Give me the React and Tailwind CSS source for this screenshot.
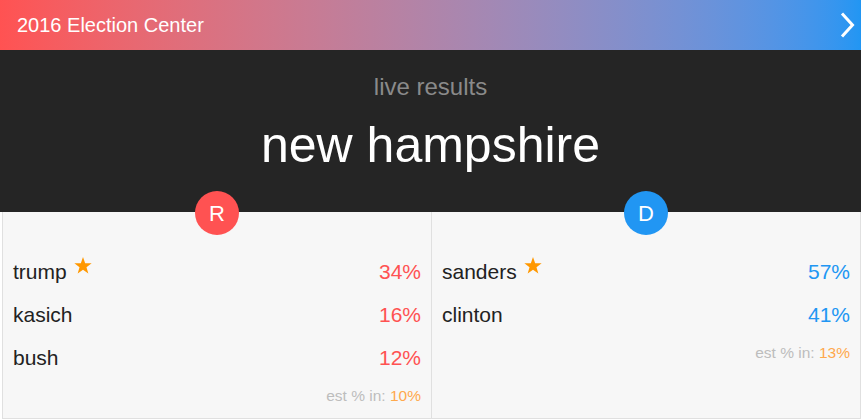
import React from "react";

const font = { fontFamily: '"Liberation Sans", Arial, sans-serif' };

function Star() {
  return (
    <svg width="18" height="17" viewBox="0 0 24 23" className="ml-[7px] self-start mt-[-3px]">
      <polygon
        points="12,0 14.9,8.3 23.7,8.5 16.7,13.9 19.2,22.4 12,17.3 4.8,22.4 7.3,13.9 0.3,8.5 9.1,8.3"
        fill="#ff9800"
      />
    </svg>
  );
}

function Row({ name, pct, color, star }) {
  return (
    <div className="h-[43px] flex items-center justify-between">
      <div className="flex items-center text-[21px] leading-[24px] text-[#222]">
        <span>{name}</span>
        {star && <Star />}
      </div>
      <span className={`text-[21px] ${color}`}>{pct}</span>
    </div>
  );
}

function Column({ letter, circle, color, rows, est, className }) {
  return (
    <div className={`relative bg-[#f7f7f7] border-[#e0e0e0] ${className}`}>
      <div
        className={`absolute left-1/2 -translate-x-1/2 top-[-21px] w-[44px] h-[44px] rounded-full ${circle} text-white text-[22px] flex items-center justify-center`}
      >
        {letter}
      </div>
      <div className="pt-[38px] px-[10px]">
        {rows.map((r) => (
          <Row key={r.name} {...r} color={color} />
        ))}
        <div className="text-right text-[15.5px] leading-[18px] pt-[8px] text-[#bdbdbd]">
          est % in: <span className="text-[#ffa94d]">{est}</span>
        </div>
      </div>
    </div>
  );
}

export default function App() {
  return (
    <div className="w-[861px] h-[419px] bg-white overflow-hidden" style={font}>
      <div className="h-[50px] flex items-center justify-between pl-[17px] pr-[5px] bg-linear-to-r from-[#ff5252] to-[#2196f3]">
        <span className="text-white text-[20px]">2016 Election Center</span>
        <svg width="16" height="26" viewBox="0 0 16 26">
          <polyline points="2,1.5 12.5,13 2,24.5" fill="none" stroke="white" strokeWidth="3" />
        </svg>
      </div>
      <div className="h-[162px] bg-[#252525] flex flex-col items-center">
        <div className="pt-[23px] text-[24px] leading-[28px] text-[#8a8a8a]">live results</div>
        <div className="mt-[15px] text-[50px] leading-[58px] text-white">new hampshire</div>
      </div>
      <div className="flex h-[207px] pl-[2px]">
        <Column
          letter="R"
          circle="bg-[#ff5252]"
          color="text-[#ff5252]"
          est="10%"
          className="w-[430px] border-l border-r border-b"
          rows={[
            { name: "trump", pct: "34%", star: true },
            { name: "kasich", pct: "16%" },
            { name: "bush", pct: "12%" },
          ]}
        />
        <Column
          letter="D"
          circle="bg-[#2196f3]"
          color="text-[#2196f3]"
          est="13%"
          className="w-[429px] border-r border-b"
          rows={[
            { name: "sanders", pct: "57%", star: true },
            { name: "clinton", pct: "41%" },
          ]}
        />
      </div>
    </div>
  );
}
